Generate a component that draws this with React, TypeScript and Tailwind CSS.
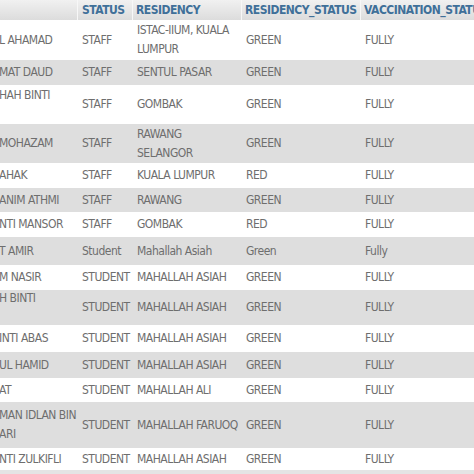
const rows = [
  { name: ["L AHAMAD"], status: "STAFF", res: ["ISTAC-IIUM, KUALA", "LUMPUR"], rs: "GREEN", vs: "FULLY", h: "h-[40px]" },
  { name: ["MAT DAUD"], status: "STAFF", res: ["SENTUL PASAR"], rs: "GREEN", vs: "FULLY", h: "h-[25px]" },
  { name: ["HAH BINTI", "\u00a0"], status: "STAFF", res: ["GOMBAK"], rs: "GREEN", vs: "FULLY", h: "h-[39px]" },
  { name: ["MOHAZAM"], status: "STAFF", res: ["RAWANG", "SELANGOR"], rs: "GREEN", vs: "FULLY", h: "h-[39px]" },
  { name: ["AHAK"], status: "STAFF", res: ["KUALA LUMPUR"], rs: "RED", vs: "FULLY", h: "h-[25px]" },
  { name: ["ANIM ATHMI"], status: "STAFF", res: ["RAWANG"], rs: "GREEN", vs: "FULLY", h: "h-[24px]" },
  { name: ["NTI MANSOR"], status: "STAFF", res: ["GOMBAK"], rs: "RED", vs: "FULLY", h: "h-[25px]" },
  { name: ["T AMIR"], status: "Student", res: ["Mahallah Asiah"], rs: "Green", vs: "Fully", h: "h-[28px]" },
  { name: ["M NASIR"], status: "STUDENT", res: ["MAHALLAH ASIAH"], rs: "GREEN", vs: "FULLY", h: "h-[25px]" },
  { name: ["H BINTI", "\u00a0"], status: "STUDENT", res: ["MAHALLAH ASIAH"], rs: "GREEN", vs: "FULLY", h: "h-[35px]" },
  { name: ["INTI ABAS"], status: "STUDENT", res: ["MAHALLAH ASIAH"], rs: "GREEN", vs: "FULLY", h: "h-[27px]" },
  { name: ["UL HAMID"], status: "STUDENT", res: ["MAHALLAH ASIAH"], rs: "GREEN", vs: "FULLY", h: "h-[26px]" },
  { name: ["AT"], status: "STUDENT", res: ["MAHALLAH ALI"], rs: "GREEN", vs: "FULLY", h: "h-[24px]" },
  { name: ["MAN IDLAN BIN", "ARI"], status: "STUDENT", res: ["MAHALLAH FARUOQ"], rs: "GREEN", vs: "FULLY", h: "h-[46px]" },
  { name: ["NTI ZULKIFLI"], status: "STUDENT", res: ["MAHALLAH ASIAH"], rs: "GREEN", vs: "FULLY", h: "h-[22px]" },
]

const cols = "grid grid-cols-[78px_55px_109px_119px_1fr]"

export default function App() {
  return (
    <div
      className="w-[474px] h-[474px] overflow-hidden bg-[#e4e4e4] text-[12px] leading-[19px] tracking-[-0.5px] text-[#6e6e6e]"
      style={{ fontFamily: '"Liberation Sans Narrow", "Arial Narrow", "DejaVu Sans Condensed", "Liberation Sans", sans-serif' }}
    >
      {/* header */}
      <div className={`${cols} h-[20px] bg-gradient-to-b from-[#f1f1f1] to-[#dcdcdc] font-bold text-[#3f7099] whitespace-nowrap`}>
        <div className="border-r border-[#f7f7f7]" />
        <div className="flex items-center pl-[4px] border-r border-[#f7f7f7]">STATUS</div>
        <div className="flex items-center pl-[3px] border-r border-[#f7f7f7]">RESIDENCY</div>
        <div className="flex items-center pl-[3px] border-r border-[#f7f7f7] overflow-hidden">RESIDENCY_STATUS</div>
        <div className="flex items-center pl-[3px] overflow-hidden">VACCINATION_STATU</div>
      </div>

      {rows.map((r, i) => (
        <div
          key={i}
          className={`${cols} ${r.h} whitespace-nowrap ${i % 2 === 0 ? "bg-white" : "bg-[#dedede]"}`}
        >
          <div className="flex flex-col justify-center overflow-hidden -ml-[1px]">
            {r.name.map((n, j) => (
              <span key={j}>{n}</span>
            ))}
          </div>
          <div className="flex items-center pl-[4px]">{r.status}</div>
          <div className="flex flex-col justify-center pl-[4px]">
            {r.res.map((t, j) => (
              <span key={j}>{t}</span>
            ))}
          </div>
          <div className="flex items-center pl-[4px]">{r.rs}</div>
          <div className="flex items-center pl-[4px]">{r.vs}</div>
        </div>
      ))}
    </div>
  )
}
